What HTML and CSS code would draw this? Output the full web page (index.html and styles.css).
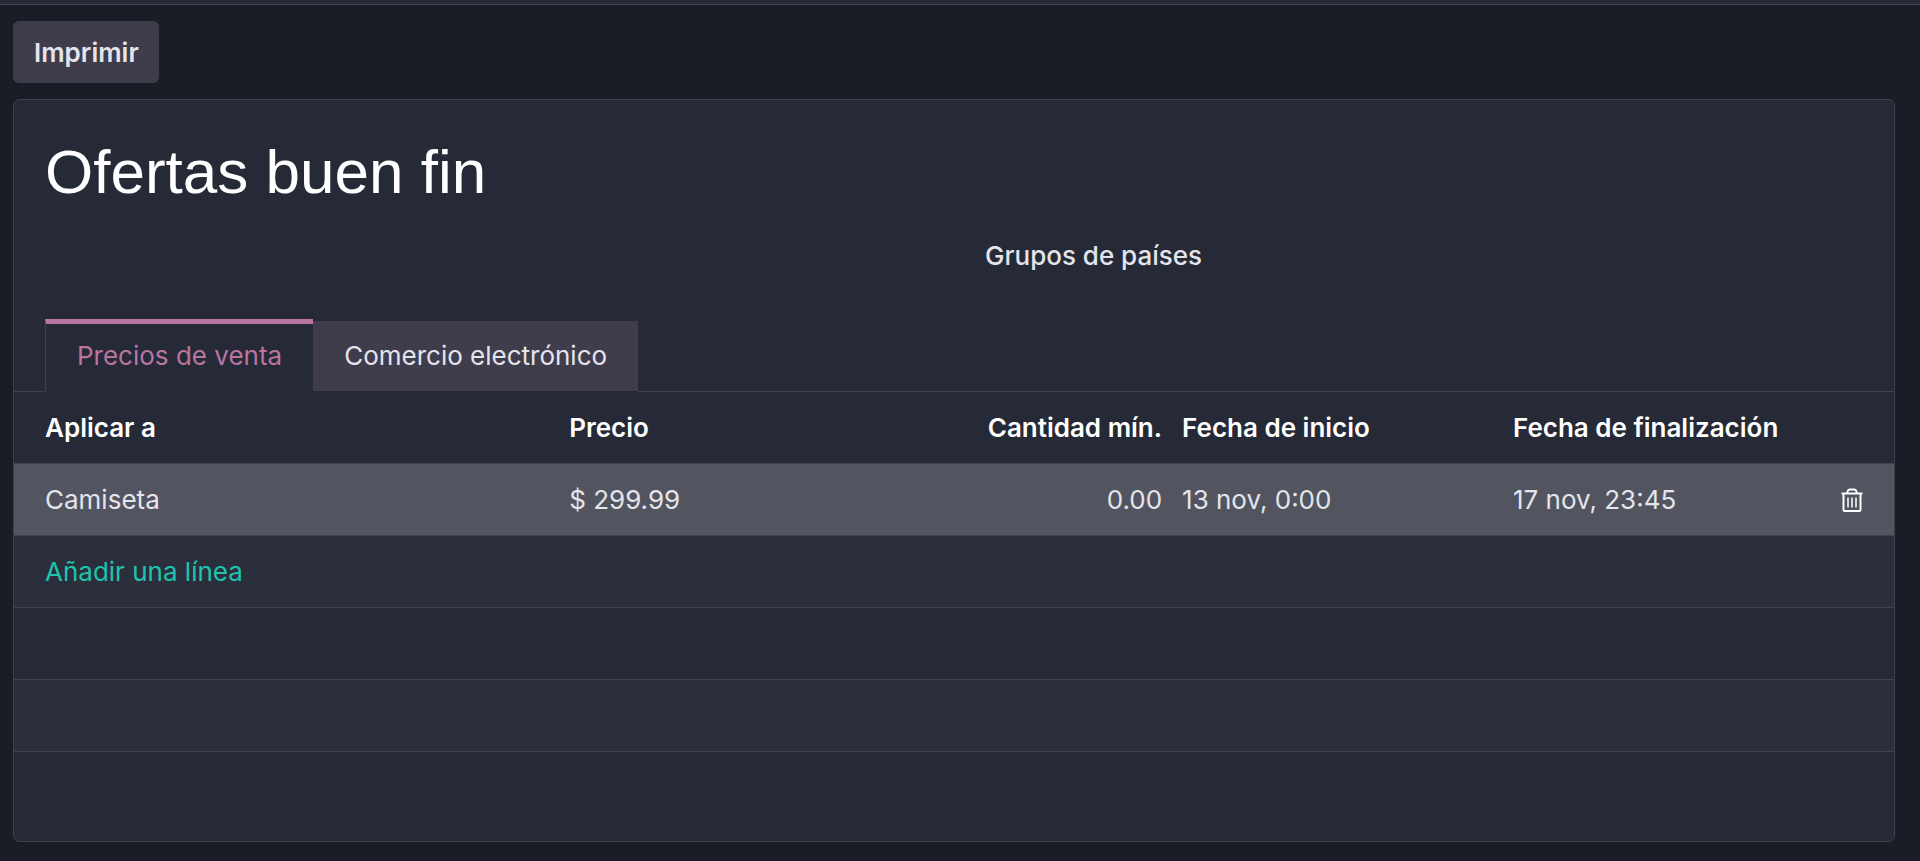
FILE: index.html
```html
<!DOCTYPE html>
<html lang="es">
<head>
  <meta charset="UTF-8" />
  <meta name="viewport" content="width=device-width, initial-scale=1.0"/>
  <title>Ofertas buen fin</title>
  <link rel="stylesheet" href="styles.css">
</head>
<body>
  <div class="top-bar"></div>

  <main class="page">
    <div class="actions">
      <button type="button" class="btn-print">Imprimir</button>
    </div>

    <section class="sheet">
      <div class="sheet-header">
        <h1>Ofertas buen fin</h1>
        <div class="fields">
          <div class="field">Grupos de países</div>
        </div>
      </div>

      <div class="tabs" role="tablist">
        <button type="button" class="tab active" role="tab" aria-selected="true">Precios de venta</button>
        <button type="button" class="tab" role="tab" aria-selected="false">Comercio electrónico</button>
      </div>

      <table class="price-table">
        <colgroup>
          <col class="col-product">
          <col class="col-price">
          <col class="col-qty">
          <col class="col-date">
          <col class="col-date">
          <col>
        </colgroup>
        <thead>
          <tr>
            <th>Aplicar a</th>
            <th>Precio</th>
            <th class="number">Cantidad mín.</th>
            <th>Fecha de inicio</th>
            <th>Fecha de finalización</th>
            <th></th>
          </tr>
        </thead>
        <tbody>
          <tr class="hovered">
            <td>Camiseta</td>
            <td>$ 299.99</td>
            <td class="number">0.00</td>
            <td>13 nov, 0:00</td>
            <td>17 nov, 23:45</td>
            <td class="trash-cell">
              <button type="button" class="btn-trash" aria-label="Eliminar">
                <svg viewBox="0 0 22 24" width="22" height="24" fill="none" stroke="currentColor" stroke-width="2" stroke-linejoin="round">
                  <path d="M0.500 5.500h21" />
                  <path d="M6 5 L7 2.500 Q7.500 1.500 8.500 1.500 H13.500 Q14.500 1.500 15 2.500 L16 5" />
                  <path d="M2.500 5.500 V21.500 Q2.500 23 4 23 H18 Q19.500 23 19.500 21.500 V5.500" />
                  <path stroke-width="1.500" d="M7 9.500v10M11 9.500v10M15 9.500v10" />
                </svg>
              </button>
            </td>
          </tr>
          <tr>
            <td colspan="6"><a href="#" class="add-line">Añadir una línea</a></td>
          </tr>
          <tr><td colspan="6"></td></tr>
          <tr><td colspan="6"></td></tr>
        </tbody>
      </table>
    </section>
  </main>
</body>
</html>
```
FILE: styles.css
```css
:root {
  --background-color: #1b1d26;
  --sheet-color: #262a36;
  --stripe-color: #2b2e3b;
  --hover-color: #52545f;
  --button-color: #3f3d4b;
  --border-color: #3f414d;
  --text-color: #e4e4ec;
  --primary-color: #b975a2;
  --link-color: #1dc4ae;
}

* {
  box-sizing: border-box;
}

body {
  margin: 0;
  background: var(--background-color);
  color: var(--text-color);
  font-family: Inter, 'Liberation Sans', sans-serif;
  font-size: 26px;
  line-height: 40px;
}

button {
  font: inherit;
  color: inherit;
  border: none;
  cursor: pointer;
}

.top-bar {
  height: 5px;
  background: var(--sheet-color);
  border-bottom: 1px solid #454653;
}

.page {
  padding: 16px 25px 12px 13px;
}

.actions {
  margin-bottom: 16px;
}

.btn-print {
  display: block;
  padding: 12px 20px 10px 21px;
  border-radius: 6px;
  background: var(--button-color);
  font-weight: 600;
}

.sheet {
  background: var(--sheet-color);
  border: 1px solid var(--border-color);
  border-radius: 7px;
  padding-bottom: 89px;
}

.sheet-header {
  padding: 32px 31px 43px;
}

h1 {
  margin: 0 0 24px;
  color: #fff;
  font-family: 'Liberation Sans', sans-serif;
  font-size: 62px;
  font-weight: 400;
  line-height: 80px;
}

.fields {
  display: grid;
  grid-template-columns: 1fr 1fr;
  column-gap: 62px;
}

.field {
  grid-column: 2;
  font-weight: 500;
}

/* Pestañas */
.tabs {
  display: flex;
  align-items: flex-end;
}

.tabs::before,
.tabs::after {
  content: "";
  width: 31px;
  border-bottom: 1px solid var(--border-color);
}

.tabs::after {
  flex: 1;
}

.tab {
  height: 71px;
  padding: 0 31px;
  background: var(--button-color);
  border-bottom: 1px solid var(--sheet-color);
}

.tab.active {
  height: 73px;
  padding-bottom: 3px;
  background: var(--sheet-color);
  border-top: 5px solid var(--primary-color);
  border-left: 1px solid var(--border-color);
  color: var(--primary-color);
}

/* Tabla de precios */
.price-table {
  width: 100%;
  table-layout: fixed;
  border-collapse: collapse;
}

.col-product {
  width: 29%;
}

.col-price {
  width: 16%;
}

.col-qty {
  width: 16.6%;
}

.col-date {
  width: 17.6%;
}

th,
td {
  height: 72px;
  padding: 2px 10px 0;
  text-align: left;
  white-space: nowrap;
  border-bottom: 1px solid var(--border-color);
}

th {
  height: 71px;
  color: #fff;
  font-weight: 600;
}

th:first-child,
td:first-child {
  padding-left: 31px;
}

.number {
  text-align: right;
}

tbody tr:nth-child(even) {
  background: var(--stripe-color);
}

.hovered {
  background: var(--hover-color);
}

td.trash-cell {
  padding-left: 0;
  padding-right: 31px;
}

.btn-trash {
  display: block;
  margin-left: auto;
  padding: 0;
  background: none;
  color: #fff;
}

.btn-trash svg {
  display: block;
}

.add-line {
  color: var(--link-color);
  text-decoration: none;
}
```
